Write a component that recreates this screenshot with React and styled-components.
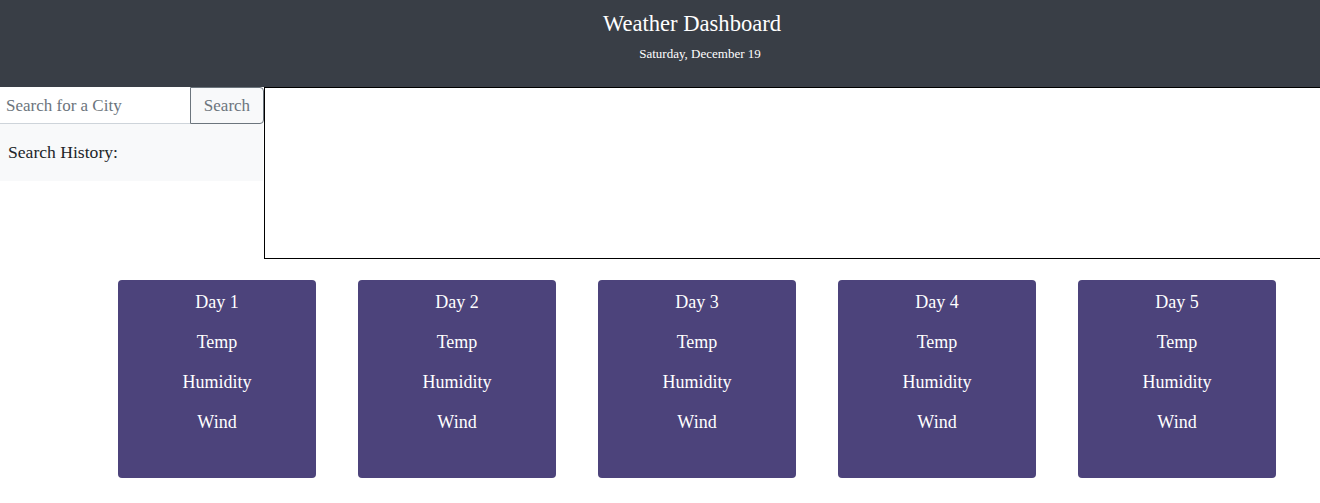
import React from "react";
import styled, { createGlobalStyle } from "styled-components";

const Global = createGlobalStyle`
  html, body { margin: 0; padding: 0; background: #ffffff; overflow: hidden; }
  body { font-family: "Liberation Serif", "DejaVu Serif", serif; color: #212529; }
  * { box-sizing: border-box; }
`;

const Header = styled.header`
  background: #393e46;
  height: 87px;
  display: flex;
  flex-direction: column;
  align-items: center;
  padding-top: 10px;
  color: #ffffff;
`;

const Title = styled.h1`
  margin: 0 0 0 64px;
  font-size: 22.6px;
  font-weight: normal;
  line-height: 28px;
`;

const DateLine = styled.p`
  margin: 8px 0 0 80px;
  font-size: 13px;
  line-height: 15px;
`;

const Main = styled.div`
  display: flex;
  align-items: flex-start;
`;

const Sidebar = styled.aside`
  width: 264px;
  flex: none;
  display: flex;
  flex-direction: column;
`;

const SearchGroup = styled.div`
  display: flex;
  height: 37px;
`;

const SearchInput = styled.input`
  width: 190px;
  border: none;
  border-bottom: 1px solid #ced4da;
  padding: 2px 6px 0;
  font-family: inherit;
  font-size: 17px;
  color: #495057;
  outline: none;
  &::placeholder { color: #6c757d; }
`;

const SearchButton = styled.button`
  width: 74px;
  border: 1px solid #6c757d;
  border-radius: 0 4px 4px 0;
  background: #f8f9fa;
  color: #6c757d;
  font-family: inherit;
  font-size: 17px;
  padding: 0;
`;

const History = styled.div`
  background: #f8f9fa;
  height: 57px;
  width: 263px;
  display: flex;
  align-items: center;
  padding: 0 0 0 8px;
  font-size: 17.6px;
`;

const CurrentBox = styled.section`
  width: 1060px;
  height: 172px;
  flex: none;
  border: 1px solid #000000;
`;

const Forecast = styled.div`
  display: flex;
  gap: 42px;
  padding: 21px 0 0 118px;
`;

const Card = styled.div`
  width: 198px;
  height: 198px;
  background: #4c437b;
  border-radius: 4px;
  color: #ffffff;
  display: flex;
  flex-direction: column;
  align-items: center;
  padding-top: 10px;
  font-size: 18px;
`;

const CardLine = styled.div`
  height: 40px;
  line-height: 24px;
`;

const days = [1, 2, 3, 4, 5];

export default function App() {
  return (
    <>
      <Global />
      <Header>
        <Title>Weather Dashboard</Title>
        <DateLine>Saturday, December 19</DateLine>
      </Header>
      <Main>
        <Sidebar>
          <SearchGroup>
            <SearchInput placeholder="Search for a City" />
            <SearchButton>Search</SearchButton>
          </SearchGroup>
          <History>Search History:</History>
        </Sidebar>
        <CurrentBox />
      </Main>
      <Forecast>
        {days.map((d) => (
          <Card key={d}>
            <CardLine>Day {d}</CardLine>
            <CardLine>Temp</CardLine>
            <CardLine>Humidity</CardLine>
            <CardLine>Wind</CardLine>
          </Card>
        ))}
      </Forecast>
    </>
  );
}
